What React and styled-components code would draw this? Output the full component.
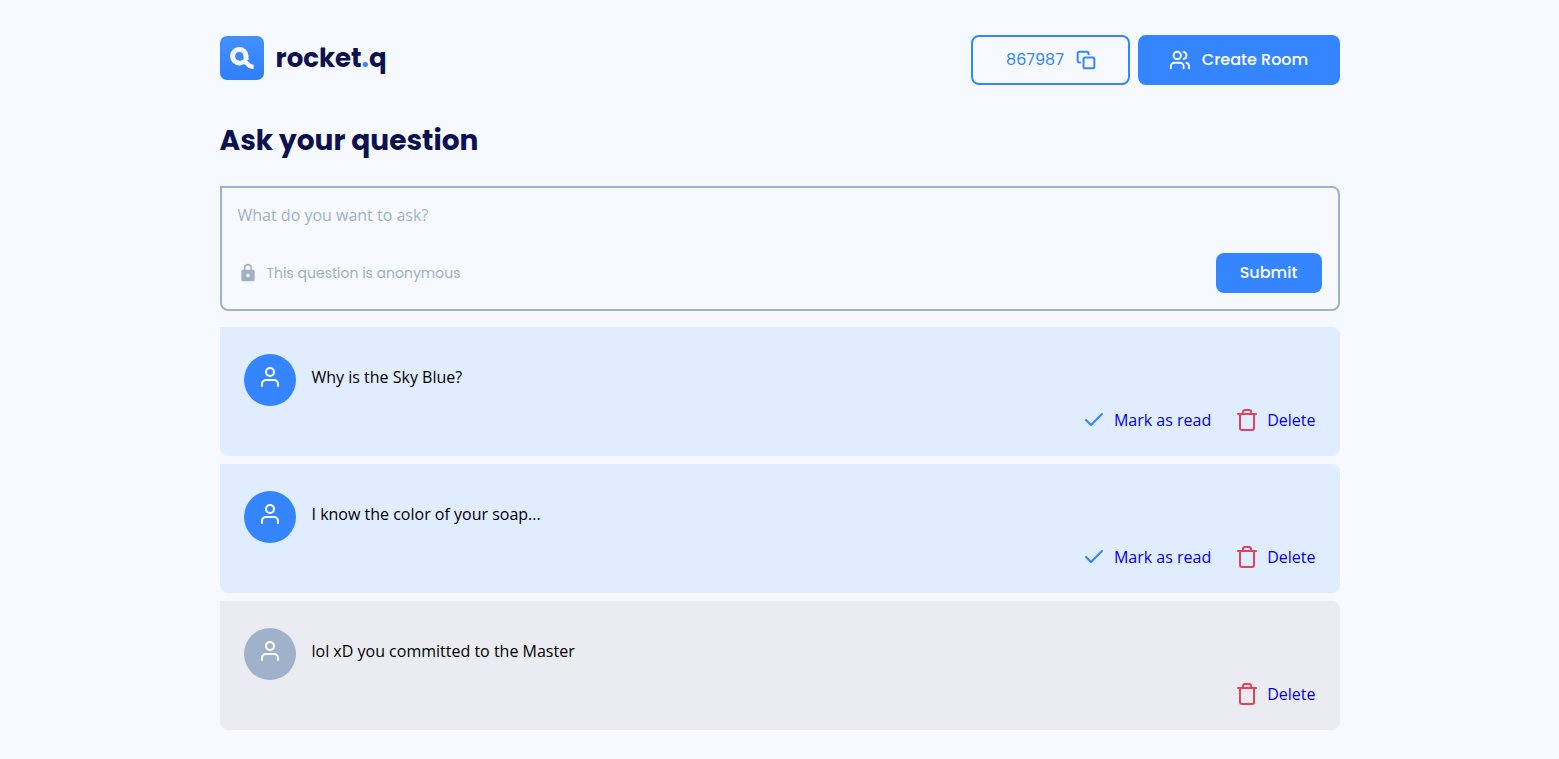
import React from "react";
import styled, { createGlobalStyle } from "styled-components";

const display = `Poppins, Inter, "Open Sans", sans-serif`;
const body = `"Open Sans", "Noto Sans", sans-serif`;

const GlobalStyle = createGlobalStyle`
  * { box-sizing: border-box; margin: 0; padding: 0; }
  body { background: #f6faff; font-family: ${body}; font-size: 16px; line-height: 24px; color: #000; }
  button { font-family: ${display}; cursor: pointer; }
`;

const Page = styled.div`
  max-width: 1168px;
  margin: 0 auto;
  padding: 35px 24px 24px;
`;
const Header = styled.header`
  display: flex;
  align-items: center;
  justify-content: space-between;
`;
const Logo = styled.a`
  display: flex;
  align-items: center;
  gap: 12px;
  margin-bottom: 4px;
  color: #0d1150;
  font-family: ${display};
  font-size: 26px;
  font-weight: 700;
  line-height: 44px;
  text-decoration: none;
`;
const Dot = styled.span`
  color: #3485ff;
`;
const HeaderActions = styled.div`
  display: flex;
  gap: 8px;
`;
const HeaderButton = styled.button`
  display: flex;
  align-items: center;
  justify-content: center;
  gap: ${(p) => (p.$outlined ? 12 : 11)}px;
  width: ${(p) => (p.$outlined ? 159 : 202)}px;
  height: 50px;
  padding-left: ${(p) => (p.$outlined ? 2 : 0)}px;
  border: 2px solid #3485ff;
  border-radius: 8px;
  background: ${(p) => (p.$outlined ? "transparent" : "#3485ff")};
  color: ${(p) => (p.$outlined ? "#3485ff" : "#fff")};
  font-size: 16px;
  font-weight: ${(p) => (p.$outlined ? 400 : 500)};
`;
const ButtonText = styled.span`
  padding-bottom: 2px;
`;
const Title = styled.h1`
  margin: 32px 0 21px;
  color: #0d1150;
  font-family: ${display};
  font-size: 28px;
  font-weight: 700;
  line-height: 48px;
`;
const Form = styled.form`
  display: flex;
  flex-direction: column;
  height: 125px;
  padding: 16px;
  border: 2px solid #a0b1cb;
  border-radius: 0 8px 8px 8px;
`;
const Question = styled.textarea`
  flex: 1;
  width: 100%;
  border: 0;
  outline: 0;
  resize: none;
  overflow: hidden;
  background: transparent;
  font: 16px/22px ${body};
  &::placeholder { color: #a0b1cb; opacity: 1; }
`;
const FormFooter = styled.div`
  display: flex;
  align-items: center;
  justify-content: space-between;
`;
const Note = styled.p`
  display: flex;
  align-items: center;
  gap: 9px;
  color: #a3afbf;
  font-family: ${display};
  font-size: 14px;
`;
const Submit = styled.button`
  width: 106px;
  height: 40px;
  padding-bottom: 2px;
  border: 0;
  border-radius: 8px;
  background: #3485ff;
  color: #fff;
  font-size: 16px;
  font-weight: 500;
`;
const List = styled.ul`
  display: grid;
  gap: 8px;
  margin-top: 16px;
  list-style: none;
`;
const Card = styled.li`
  padding: 24px;
  min-height: 129px;
  border-radius: 0 8px 8px 8px;
  background: ${(p) => (p.$read ? "#ebecf1" : "#e0ecff")};
`;
const Content = styled.div`
  display: flex;
  gap: 16px;
  padding-top: 3px;
`;
const Avatar = styled.div`
  width: 52px;
  height: 52px;
  padding-top: 11px;
  border-radius: 50%;
  background: ${(p) => (p.$read ? "#a0b1cb" : "#3485ff")};
  text-align: center;
`;
const CardText = styled.p`
  padding-top: 11px;
`;
const CardActions = styled.div`
  display: flex;
  justify-content: flex-end;
  gap: 24px;
  margin-top: 2px;
`;
const ActionLink = styled.a`
  display: flex;
  align-items: center;
  gap: 8px;
  color: #0000ee;
  text-decoration: none;
`;

const Icon = ({ size = 24, stroke = "currentColor", width = 2, children }) => (
  <svg width={size} height={size} viewBox="0 0 24 24" fill="none" stroke={stroke}
    strokeWidth={width} strokeLinecap="round" strokeLinejoin="round" aria-hidden="true">
    {children}
  </svg>
);

const LogoMark = () => (
  <svg width="44" height="44" viewBox="0 0 44 44" aria-hidden="true">
    <defs>
      <linearGradient id="mark" x1="0" y1="0" x2="0" y2="1">
        <stop offset="0" stopColor="#4490ff" />
        <stop offset="1" stopColor="#2f7ffa" />
      </linearGradient>
    </defs>
    <rect width="44" height="44" rx="7" fill="url(#mark)" />
    <g fill="none" stroke="#f6faff">
      <path d="M26 24V19.900a6.700 6.700 0 1 0-6.700 7" strokeWidth="5" />
      <path d="M18.500 27.200c3.500 0 3.500-1.700 6.500-1.200s2.500 4.800 8.600 5" strokeWidth="4.400" />
    </g>
  </svg>
);

const questions = [
  { text: "Why is the Sky Blue?", read: false },
  { text: "I know the color of your soap...", read: false },
  { text: "lol xD you committed to the Master", read: true },
];

export default function App() {
  return (
    <>
      <GlobalStyle />
      <Page>
        <Header>
          <Logo href="#">
            <LogoMark />
            <span>rocket<Dot>.</Dot>q</span>
          </Logo>
          <HeaderActions>
            <HeaderButton type="button" $outlined>
              <ButtonText>867987</ButtonText>
              <Icon size={20} width={2.4}>
                <rect x="9" y="9" width="13" height="13" rx="2" />
                <path d="M5 15H4a2 2 0 0 1-2-2V4a2 2 0 0 1 2-2h9a2 2 0 0 1 2 2v1" />
              </Icon>
            </HeaderButton>
            <HeaderButton type="button">
              <Icon size={22}>
                <path d="M16 21v-2a4 4 0 0 0-4-4H6a4 4 0 0 0-4 4v2M22 21v-2a4 4 0 0 0-3-3.870M16 3.130a4 4 0 0 1 0 7.750" />
                <circle cx="9" cy="7" r="4" />
              </Icon>
              <ButtonText>Create Room</ButtonText>
            </HeaderButton>
          </HeaderActions>
        </Header>
        <main>
          <Title>Ask your question</Title>
          <Form onSubmit={(e) => e.preventDefault()}>
            <Question aria-label="Question" placeholder="What do you want to ask?" />
            <FormFooter>
              <Note>
                <svg width="20" height="20" viewBox="0 0 24 24" fill="#a3afc3" aria-hidden="true">
                  <path d="M18 8h-1V6A5 5 0 0 0 7 6v2H6a2 2 0 0 0-2 2v10a2 2 0 0 0 2 2h12a2 2 0 0 0 2-2V10a2 2 0 0 0-2-2zM12 17a2 2 0 1 1 0-4 2 2 0 0 1 0 4zM9 8V6a3 3 0 0 1 6 0v2z" />
                </svg>
                This question is anonymous
              </Note>
              <Submit type="submit">Submit</Submit>
            </FormFooter>
          </Form>
          <List>
            {questions.map((q) => (
              <Card key={q.text} $read={q.read}>
                <Content>
                  <Avatar $read={q.read}>
                    <Icon stroke="#fff">
                      <path d="M20 21v-2a4 4 0 0 0-4-4H8a4 4 0 0 0-4 4v2" />
                      <circle cx="12" cy="7" r="4" />
                    </Icon>
                  </Avatar>
                  <CardText>{q.text}</CardText>
                </Content>
                <CardActions>
                  {!q.read && (
                    <ActionLink href="#">
                      <Icon stroke="#3485ff"><path d="M20 6 9 17l-5-5" /></Icon>
                      Mark as read
                    </ActionLink>
                  )}
                  <ActionLink href="#">
                    <Icon stroke="#e83f5b">
                      <path d="M3 6h18M19 6v14a2 2 0 0 1-2 2H7a2 2 0 0 1-2-2V6M8 6V4a2 2 0 0 1 2-2h4a2 2 0 0 1 2 2v2" />
                    </Icon>
                    Delete
                  </ActionLink>
                </CardActions>
              </Card>
            ))}
          </List>
        </main>
      </Page>
    </>
  );
}
